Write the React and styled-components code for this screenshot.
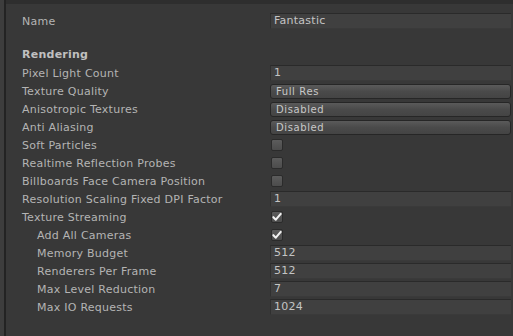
import React from 'react';
import styled, { createGlobalStyle } from 'styled-components';

const GlobalStyle = createGlobalStyle`
    html, body {
        margin: 0;
        padding: 0;
        background: #383838;
        overflow: hidden;
    }
    body {
        font-family: 'DejaVu Sans', 'Liberation Sans', sans-serif;
        font-size: 11px;
        color: #b4b4b4;
    }
`;

const Frame = styled.div`
    width: 513px;
    height: 336px;
    overflow: hidden;
    display: flex;
    background: #383838;
`;

const EdgeStrip = styled.div`
    width: 4px;
    flex: none;
    background: #3d3d3d;
    border-right: 2px solid #232323;
`;

const Panel = styled.div`
    flex: 1;
    display: flex;
    flex-direction: column;
    padding: 8px 2px 0 16px;
    border-top: 4px solid #2e2e2e;
`;

const Row = styled.div`
    flex: none;
    display: grid;
    grid-template-columns: 248px 1fr;
    align-items: center;
    height: ${(p) => (p.$header ? 19 : 18)}px;
    margin-top: ${(p) => (p.$gap ? 15 : 0)}px;
`;

const Label = styled.div`
    padding-left: ${(p) => (p.$indent ? 15 : 0)}px;
    font-weight: ${(p) => (p.$bold ? 'bold' : 'normal')};
    color: ${(p) => (p.$bold ? '#c0c0c0' : '#b4b4b4')};
    white-space: nowrap;
    letter-spacing: 0.25px;
`;

const TextField = styled.div`
    height: 16px;
    box-sizing: border-box;
    background: #404040;
    border-top: 1px solid #2a2a2a;
    border-bottom: 1px solid #3a3a3a;
    border-left: 1px solid #303030;
    padding-left: 3px;
    line-height: 14px;
    letter-spacing: 0.25px;
    color: #c4c4c4;
`;

const Dropdown = styled.div`
    height: 15px;
    box-sizing: border-box;
    margin-top: 1px;
    background: linear-gradient(#5a5a5a, #4a4a4a 50%, #444444);
    border: 1px solid #262626;
    border-radius: 3px;
    padding-left: 5px;
    font-size: 10px;
    line-height: 13px;
    letter-spacing: 0.6px;
    color: #c8c8c8;
`;

const Check = styled.div`
    width: 12px;
    height: 12px;
    margin-left: 1px;
    box-sizing: border-box;
    border-radius: 2px;
    border: 1px solid #2b2b2b;
    background: linear-gradient(#5c5c5c, #4c4c4c);
    display: flex;
    align-items: center;
    justify-content: center;
`;

const CheckMark = () => (
    <svg width="11" height="10" viewBox="0 0 11 10">
        <path d="M1.5 5.2 L4.2 8 L9.6 1.6" fill="none" stroke="#f2f2f2" strokeWidth="2.2" strokeLinecap="round" strokeLinejoin="round" />
    </svg>
);

const rows = [
    { label: 'Pixel Light Count', kind: 'text', value: '1' },
    { label: 'Texture Quality', kind: 'drop', value: 'Full Res' },
    { label: 'Anisotropic Textures', kind: 'drop', value: 'Disabled' },
    { label: 'Anti Aliasing', kind: 'drop', value: 'Disabled' },
    { label: 'Soft Particles', kind: 'check' },
    { label: 'Realtime Reflection Probes', kind: 'check' },
    { label: 'Billboards Face Camera Position', kind: 'check' },
    { label: 'Resolution Scaling Fixed DPI Factor', kind: 'text', value: '1' },
    { label: 'Texture Streaming', kind: 'check', checked: true },
    { label: 'Add All Cameras', kind: 'check', checked: true, indent: true },
    { label: 'Memory Budget', kind: 'text', value: '512', indent: true },
    { label: 'Renderers Per Frame', kind: 'text', value: '512', indent: true },
    { label: 'Max Level Reduction', kind: 'text', value: '7', indent: true },
    { label: 'Max IO Requests', kind: 'text', value: '1024', indent: true },
];

const Value = ({ row }) => {
    if (row.kind === 'text') return <TextField>{row.value}</TextField>;
    if (row.kind === 'drop') return <Dropdown>{row.value}</Dropdown>;
    return <Check>{row.checked && <CheckMark />}</Check>;
};

const App = () => {
    return (
        <Frame>
            <GlobalStyle />
            <EdgeStrip />
            <Panel>
                <Row>
                    <Label>Name</Label>
                    <TextField>Fantastic</TextField>
                </Row>
                <Row $gap $header>
                    <Label $bold>Rendering</Label>
                </Row>
                {rows.map((r) => (
                    <Row key={r.label}>
                        <Label $indent={r.indent}>{r.label}</Label>
                        <div>
                            <Value row={r} />
                        </div>
                    </Row>
                ))}
                <Row $gap $header>
                    <Label $bold>Shadows</Label>
                </Row>
            </Panel>
        </Frame>
    );
};

export default App;
